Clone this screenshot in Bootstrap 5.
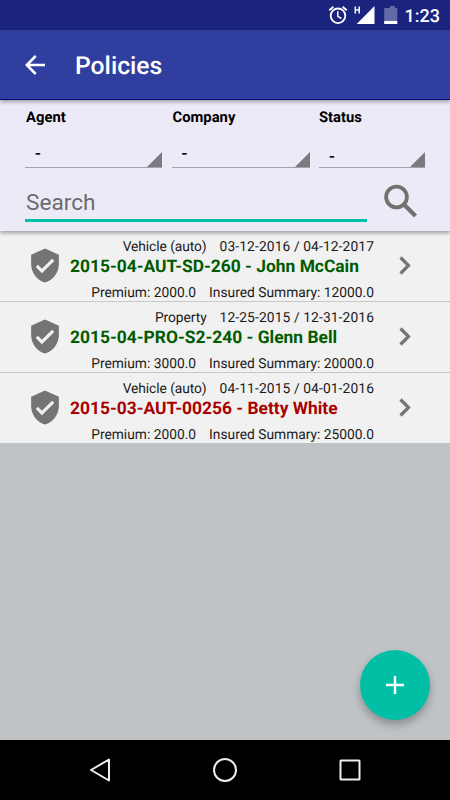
<!DOCTYPE html>
<html lang="en">
<head>
<meta charset="utf-8">
<meta name="viewport" content="width=device-width, initial-scale=1">
<title>Policies</title>
<link href="https://cdn.jsdelivr.net/npm/bootstrap@5.3.0/dist/css/bootstrap.min.css" rel="stylesheet">
<style>
body{font-family:Roboto,"Liberation Sans",sans-serif;width:450px;height:800px;background:#bfc3c6;color:#000;overflow:hidden;text-rendering:geometricPrecision}
svg{display:block;flex:none}
.status-bar{height:30px;background:#1a237e;padding-right:10px;font-size:18px;font-weight:500}
.status-bar span{line-height:30px;padding-top:3px}
.status-icons{margin-right:-33px}
.app-bar{height:70px;background:#303f9f;border-bottom:1px solid #00087f;box-shadow:0 2px 4px rgba(0,0,0,.32);z-index:3;padding:1px 0 0 25px}
.app-title{font-size:24.7px;font-weight:500;line-height:30px;margin:4px 0 0 29px}
.filters{height:131px;background:#eceaf6;box-shadow:0 2px 4px rgba(0,0,0,.36);z-index:2;padding:8px 25px 0}
.field-label{font-size:14.8px;font-weight:700;line-height:19px;padding-left:1px;display:block}
.w-c .field-label{padding-left:0}
.spinner-box{height:41px;border-bottom:1px solid #a3a2a9;font-size:17px;font-weight:500;line-height:20px;padding:17px 0 0 10px;position:relative}
.spinner-box::after{content:"";position:absolute;right:0;bottom:0;border:solid transparent;border-width:0 0 15px 15px;border-bottom-color:#7b7a80}
.w-a{width:137px}.w-b{width:138px}.w-c{width:106px}
.w-c .spinner-box{padding-top:20px}
.search-field{width:342px;height:40px;margin-top:14px;border:0;border-bottom:3px solid #00bfa5;border-radius:0;background:none;padding:4px 0 0 1px;font-size:22.6px;line-height:30px;color:#000}
.search-field::placeholder{color:#6b6a6f;opacity:1}
.policy{height:71px;background:#f1f1f1;border-bottom:1px solid #c8c8c9;padding-left:25px}
.policy:last-child{height:70px;border-bottom:0}
.policy-text{width:304px;margin-left:5px;line-height:18px;padding-top:7px}
.policy-line{gap:13px;white-space:nowrap;font-size:13.8px;color:#1a1a1a}
.policy-line.term span:first-child{letter-spacing:-.07px}
.policy-line.term span:last-child{letter-spacing:.11px}
.policy-name{font-size:17.4px;font-weight:700;line-height:21px;white-space:nowrap;margin-top:1px}
.policy-line.totals{margin-top:6px}
.active-policy{color:#005b00}.expired-policy{color:#a80000}
.chevron{margin:25px 0 0 25px}
.add-btn{position:absolute;left:360px;top:650px;width:70px;height:70px;background:#00bfa5;box-shadow:0 5px 9px rgba(0,0,0,.27)}
.nav-keys{height:60px;background:#000}
</style>
</head>
<body class="d-flex flex-column position-relative">
<svg width="0" height="0" class="position-absolute" aria-hidden="true">
<symbol id="shield" viewBox="0 0 24 24"><path fill="#747474" d="M12 1 3 5v6c0 5.55 3.84 10.74 9 12 5.16-1.26 9-6.45 9-12V5l-9-4zm-2 16-4-4 1.410-1.410L10 14.170l6.590-6.590L18 9l-8 8z"/></symbol>
<symbol id="chevron" viewBox="0 0 12 20"><path fill="none" stroke="#757575" stroke-width="3.200" d="M1.500 1.500 9.500 9.500 1.500 17.500"/></symbol>
</svg>
<header class="status-bar d-flex align-items-center justify-content-end text-white">
<svg class="status-icons" width="115" height="30" viewBox="0 0 115 30">
<g fill="none" stroke="#fff" stroke-width="1.800"><circle cx="15" cy="15.800" r="7.300"/><path d="M14.800 11.200v5.100l3.600 2.200" stroke-width="1.500"/><path d="M6.300 10.200l4.100-3.500M23.700 10.200l-4.100-3.500"/></g>
<path d="M32.300 6.500v7M36.200 6.500v7M32.300 10h3.900" stroke="#fff" stroke-width="1.500"/>
<path d="M51.500 6v18H33.700z" fill="#fff"/>
<path d="M64.300 8h2.500V6h5v2h2.500v13H61.200V8z" fill="#646aa7"/><path d="M61.200 21h13.100v3H61.200z" fill="#fff"/>
</svg><span>1:23</span>
</header>
<nav class="app-bar d-flex align-items-center text-white position-relative">
<svg width="21" height="20" viewBox="0 0 21 20"><path d="M20 10H2M10.700 1 1.800 10l8.900 9" fill="none" stroke="#fff" stroke-width="2.500"/></svg>
<h1 class="app-title">Policies</h1>
</nav>
<section class="filters position-relative">
<div class="d-flex justify-content-between">
<div class="w-a"><span class="field-label">Agent</span><div class="spinner-box">-</div></div>
<div class="w-b"><span class="field-label">Company</span><div class="spinner-box">-</div></div>
<div class="w-c"><span class="field-label">Status</span><div class="spinner-box">-</div></div>
</div>
<div class="d-flex">
<input class="search-field" type="text" placeholder="Search" aria-label="Search">
<svg class="ms-3 mt-3" width="36" height="36" viewBox="0 0 36 36"><g fill="none" stroke="#71716f" stroke-width="3.800"><circle cx="13.500" cy="13" r="10.400"/><path d="m21 20.500 11.500 11.500" stroke-width="4.200"/></g></svg>
</div>
</section>
<main class="flex-grow-1">
<article class="policy d-flex align-items-start">
<svg class="mt-3" width="40" height="37" viewBox="0 0 24 24"><use href="#shield"/></svg>
<div class="policy-text"><div class="policy-line term d-flex justify-content-end"><span>Vehicle (auto)</span><span>03-12-2016 / 04-12-2017</span></div><div class="policy-name active-policy">2015-04-AUT-SD-260 - John McCain</div><div class="policy-line totals d-flex justify-content-end"><span>Premium: 2000.0</span><span>Insured Summary: 12000.0</span></div></div>
<svg class="chevron" width="12" height="20"><use href="#chevron"/></svg>
</article>
<article class="policy d-flex align-items-start">
<svg class="mt-3" width="40" height="37" viewBox="0 0 24 24"><use href="#shield"/></svg>
<div class="policy-text"><div class="policy-line term d-flex justify-content-end"><span>Property</span><span>12-25-2015 / 12-31-2016</span></div><div class="policy-name active-policy">2015-04-PRO-S2-240 - Glenn Bell</div><div class="policy-line totals d-flex justify-content-end"><span>Premium: 3000.0</span><span>Insured Summary: 20000.0</span></div></div>
<svg class="chevron" width="12" height="20"><use href="#chevron"/></svg>
</article>
<article class="policy d-flex align-items-start">
<svg class="mt-3" width="40" height="37" viewBox="0 0 24 24"><use href="#shield"/></svg>
<div class="policy-text"><div class="policy-line term d-flex justify-content-end"><span>Vehicle (auto)</span><span>04-11-2015 / 04-01-2016</span></div><div class="policy-name expired-policy">2015-03-AUT-00256 - Betty White</div><div class="policy-line totals d-flex justify-content-end"><span>Premium: 2000.0</span><span>Insured Summary: 25000.0</span></div></div>
<svg class="chevron" width="12" height="20"><use href="#chevron"/></svg>
</article>
</main>
<button class="add-btn btn rounded-circle border-0 p-0 d-flex align-items-center justify-content-center" aria-label="Add policy"><svg width="18" height="18" viewBox="0 0 18 18"><path d="M9 0v18M0 9h18" stroke="#fff" stroke-width="2.400"/></svg></button>
<footer class="nav-keys">
<svg width="450" height="60" viewBox="0 0 450 60" fill="none" stroke="#eee" stroke-width="2" stroke-linejoin="round"><path d="M109 19.500v21L91 30z"/><circle cx="225" cy="30" r="11"/><rect x="340.500" y="20.500" width="19" height="19" rx=".5"/></svg>
</footer>
<script src="https://cdn.jsdelivr.net/npm/bootstrap@5.3.0/dist/js/bootstrap.bundle.min.js"></script>
</body>
</html>
